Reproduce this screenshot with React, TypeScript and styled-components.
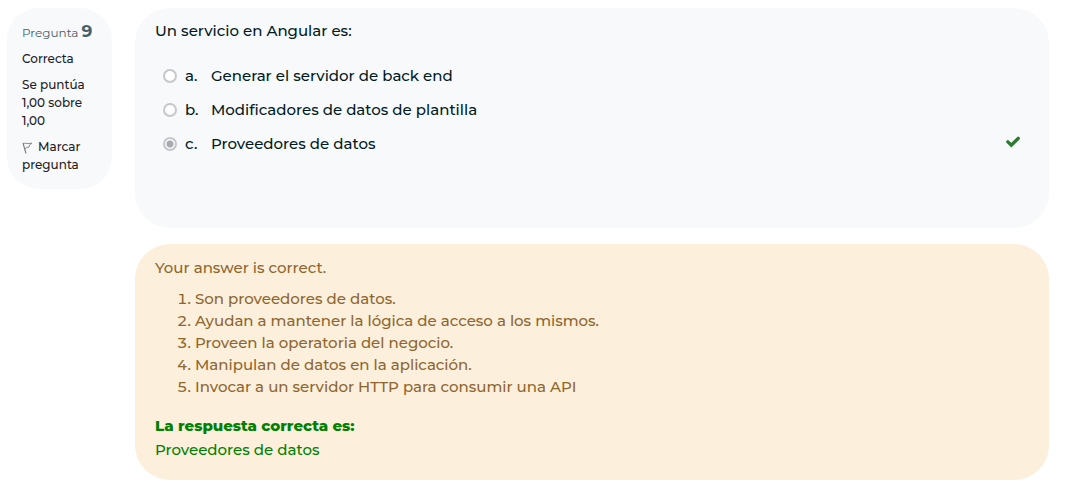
import React from "react";
import styled, { createGlobalStyle } from "styled-components";

const GlobalStyle = createGlobalStyle`
  *, *::before, *::after { box-sizing: border-box; }
  body {
    margin: 0;
    background: #fff;
    color: #001a1e;
    font-family: Montserrat, Inter, "Liberation Sans", sans-serif;
    font-size: 15px;
    font-weight: 500;
    line-height: 22px;
  }
`;

const Question = styled.main`
  display: flex;
  align-items: flex-start;
  gap: 23px;
  padding: 8px 16px 12px 7px;
`;

const Info = styled.aside`
  flex: 0 0 105px;
  padding: 13px 15px 15px;
  border-radius: 32px;
  background: #f8f9fb;
  color: #1d2125;
  font-size: 12px;
  line-height: 18px;
`;

const Number = styled.h3`
  margin: 0 0 7px;
  color: #495e6b;
  font-size: 12px;
  font-weight: 400;
  line-height: 20px;
  white-space: nowrap;
`;

const NumberValue = styled.span`
  font-size: 17px;
  font-weight: 700;
`;

const InfoLine = styled.p`
  margin: 0 0 8px;
`;

const FlagLink = styled.a`
  display: block;
  color: inherit;
  text-decoration: none;
`;

const FlagIcon = styled.svg`
  width: 12px;
  height: 12px;
  margin-right: 4px;
  vertical-align: -3px;
`;

const Content = styled.div`
  flex: 1;
  min-width: 0;
  display: flex;
  flex-direction: column;
  gap: 16px;
`;

const Formulation = styled.section`
  padding: 12px 20px 61px;
  border-radius: 35px;
  background: #f8f9fb;
`;

const Answers = styled.fieldset`
  margin: 0;
  padding: 0 0 0 8px;
  border: 0;
`;

const Prompt = styled.legend`
  margin: 0 0 23px -8px;
  padding: 0;
`;

const Answer = styled.div`
  display: flex;
  align-items: center;
  height: 22px;
  margin-bottom: 12px;
`;

const Radio = styled.input`
  appearance: none;
  flex: none;
  width: 14px;
  height: 14px;
  margin: 0 8px 0 0;
  border: 2px solid #c6c6cd;
  border-radius: 50%;
  background: #fff;

  &:checked {
    background: radial-gradient(circle, #a9a9b1 3px, #fafafb 4px);
  }
`;

const AnswerLabel = styled.label`
  display: flex;
  flex: 1;
`;

const Letter = styled.span`
  width: 26px;
`;

const CheckIcon = styled.svg`
  width: 14px;
  height: 12px;
  margin: 0 9px 4px 0;
`;

const Outcome = styled.section`
  padding: 13px 20px 18px;
  border-radius: 35px;
  background: #fcefdc;
  color: #8e662e;
`;

const Feedback = styled.p`
  margin: 0 0 9px;
`;

const Reasons = styled.ol`
  margin: 0 0 16px;
  padding-left: 40px;
`;

const RightAnswer = styled.p`
  margin: 0;
  color: #008000;
  line-height: 24px;
`;

const RightAnswerTitle = styled.strong`
  display: block;
  font-weight: 800;
`;

const answers = [
  "Generar el servidor de back end",
  "Modificadores de datos de plantilla",
  "Proveedores de datos",
];

const reasons = [
  "Son proveedores de datos.",
  "Ayudan a mantener la lógica de acceso a los mismos.",
  "Proveen la operatoria del negocio.",
  "Manipulan de datos en la aplicación.",
  "Invocar a un servidor HTTP para consumir una API",
];

export default function App() {
  return (
    <>
      <GlobalStyle />
      <Question>
        <Info>
          <Number>
            Pregunta <NumberValue>9</NumberValue>
          </Number>
          <InfoLine>Correcta</InfoLine>
          <InfoLine>Se puntúa 1,00 sobre 1,00</InfoLine>
          <FlagLink href="#marcar">
            <FlagIcon viewBox="0 0 12 12" fill="none" stroke="#77797c" aria-hidden="true">
              <path d="M1 1 4 11.5" strokeWidth="1.1" />
              <path d="M1.2 1.6C3 .6 5 2.2 9.8 1.2 7.6 2.4 7.2 3.8 7 5.2 5.4 5 4.2 5.6 3 6.8" strokeWidth=".9" />
            </FlagIcon>
            Marcar pregunta
          </FlagLink>
        </Info>
        <Content>
          <Formulation>
            <Answers>
              <Prompt>Un servicio en Angular es:</Prompt>
              {answers.map((text, i) => (
                <Answer key={text}>
                  <Radio type="radio" name="answer" id={`answer${i}`} disabled defaultChecked={i === 2} />
                  <AnswerLabel htmlFor={`answer${i}`}>
                    <Letter>{"abc"[i]}.</Letter>
                    {text}
                  </AnswerLabel>
                  {i === 2 && (
                    <CheckIcon viewBox="0 0 14 12" role="img" aria-label="Correcta">
                      <path
                        d="M1.9 5.9 5.3 9.2 12.2 2.4"
                        fill="none"
                        stroke="#2c7a32"
                        strokeWidth="3.4"
                        strokeLinecap="round"
                      />
                    </CheckIcon>
                  )}
                </Answer>
              ))}
            </Answers>
          </Formulation>
          <Outcome>
            <Feedback>Your answer is correct.</Feedback>
            <Reasons>
              {reasons.map((text) => (
                <li key={text}>{text}</li>
              ))}
            </Reasons>
            <RightAnswer>
              <RightAnswerTitle>La respuesta correcta es:</RightAnswerTitle>
              Proveedores de datos
            </RightAnswer>
          </Outcome>
        </Content>
      </Question>
    </>
  );
}
